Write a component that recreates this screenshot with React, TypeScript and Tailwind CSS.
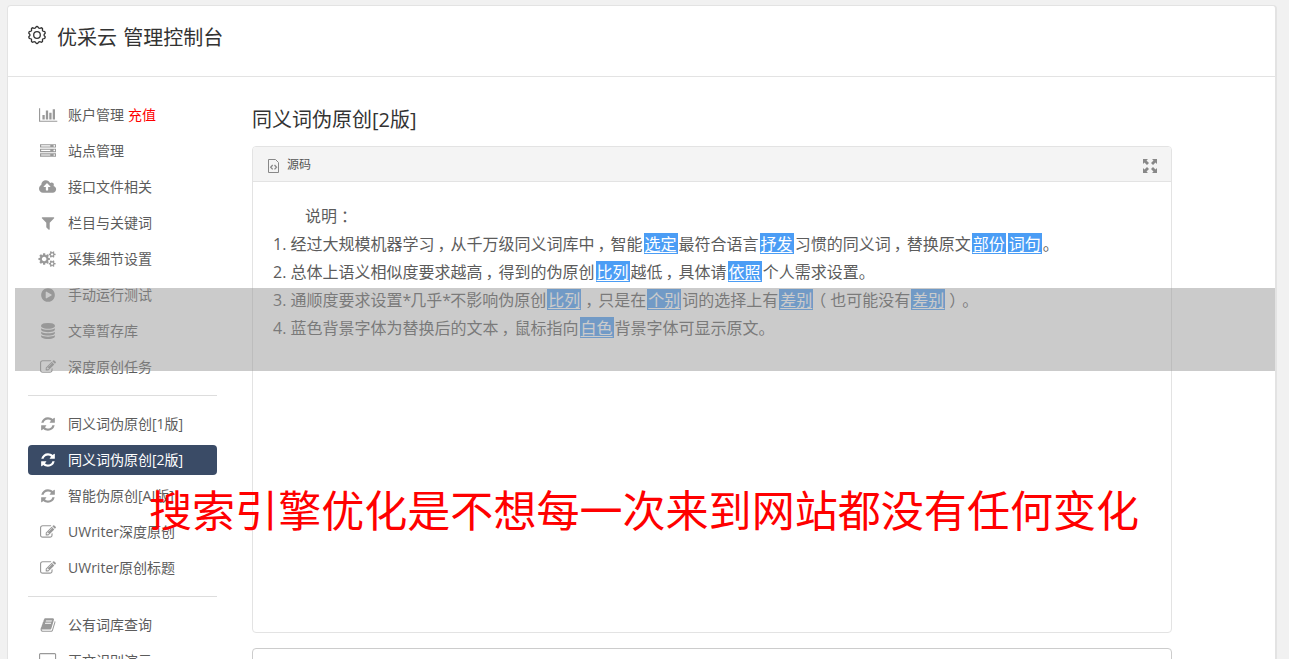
import React from 'react';

interface MenuItem {
  icon: string;
  label: string;
  extra?: string;
  active?: boolean;
}

interface Glyph {
  width: number;
  d: string;
}

const smallCog =
  'v140q0 16-149 31-12 27-30 52 51 113 51 138 0 4-4 7-122 71-124 71-8 0-46-47t-52-68q-20 2-30 2t-30-2q-14 21-52 68t-46 47q-2 0-124-71-4-3-4-7 0-25 51-138-18-25-30-52-149-15-149-31v-140q0-16 149-31 13-29 30-52-51-113-51-138 0-4 4-7 4-2 35-20t59-34 30-16q8 0 46 46.5t52 67.5q20-2 30-2t30 2q51-71 92-112l6-2q4 0 124 70 4 3 4 7 0 25-51 138 17 23 30 52 149 15 149 31z';

const glyphs: Record<string, Glyph> = {
  chart: {
    width: 2048,
    d: 'M640 896v512h-256v-512h256zm384-512v1024h-256v-1024h256zm1024 1152v128h-2048v-1536h128v1408h1920zm-640-896v768h-256v-768h256zm384-384v1152h-256v-1152h256z',
  },
  server: {
    width: 1792,
    d: 'M128 1408h1024v-128h-1024v128zm0-512h1024v-128h-1024v128zm1568 448q0-40-28-68t-68-28-68 28-28 68 28 68 68 28 68-28 28-68zm-1568-960h1024v-128h-1024v128zm1568 448q0-40-28-68t-68-28-68 28-28 68 28 68 68 28 68-28 28-68zm0-512q0-40-28-68t-68-28-68 28-28 68 28 68 68 28 68-28 28-68zm96 832v384h-1792v-384h1792zm0-512v384h-1792v-384h1792zm0-512v384h-1792v-384h1792z',
  },
  upload: {
    width: 1920,
    d: 'M1280 864q0-14-9-23l-352-352q-9-9-23-9t-23 9l-351 351q-10 12-10 24 0 14 9 23t23 9h224v352q0 13 9.5 22.5t22.5 9.5h192q13 0 22.5-9.5t9.5-22.5v-352h224q13 0 22.5-9.5t9.5-22.5zm640 288q0 159-112.5 271.5t-271.5 112.5h-1088q-185 0-316.5-131.5t-131.5-316.5q0-130 70-240t188-165q-2-30-2-43 0-212 150-362t362-150q156 0 285.5 87t188.5 231q71-62 166-62 106 0 181 75t75 181q0 76-41 138 130 31 213.5 135.5t83.5 238.5z',
  },
  filter: {
    width: 1792,
    d: 'M1595 295q17 41-14 70l-493 493v742q0 42-39 59-13 5-25 5-27 0-45-19l-256-256q-19-19-19-45v-486l-493-493q-31-29-14-70 17-39 59-39h1280q42 0 59 39z',
  },
  cogs: {
    width: 1920,
    d:
      'M832 896q0-106-75-181t-181-75-181 75-75 181 75 181 181 75 181-75 75-181zm768 512q0-52-38-90t-90-38-90 38-38 90q0 53 37.5 90.5t90.5 37.5 90.5-37.5 37.5-90.5zm0-1024q0-52-38-90t-90-38-90 38-38 90q0 53 37.5 90.5t90.5 37.5 90.5-37.5 37.5-90.5zm-384 421v185q0 10-7 19.5t-16 10.5l-155 24q-11 35-32 76 34 48 90 115 7 11 7 20 0 12-7 19-23 30-82.5 89.5t-78.5 59.5q-11 0-21-7l-115-90q-37 19-77 31-11 108-23 155-7 24-30 24h-186q-11 0-20-7.5t-10-17.5l-23-153q-34-10-75-31l-118 89q-7 7-20 7-11 0-21-8-144-133-144-160 0-9 7-19 10-14 41-53t47-61q-23-44-35-82l-152-24q-10-1-17-9.5t-7-19.5v-185q0-10 7-19.5t16-10.5l155-24q11-35 32-76-34-48-90-115-7-11-7-20 0-12 7-20 22-30 82-89t79-59q11 0 21 7l115 90q34-18 77-32 11-108 23-154 7-24 30-24h186q11 0 20 7.5t10 17.5l23 153q34 10 75 31l118-89q8-7 20-7 11 0 21 8 144 133 144 160 0 8-7 19-12 16-42 54t-45 60q23 48 34 82l152 23q10 2 17 10.5t7 19.5z' +
      'M1856 1338' + smallCog +
      'M1856 314' + smallCog,
  },
  play: {
    width: 1792,
    d: 'M896 128q209 0 385.5 103t279.5 279.5 103 385.5-103 385.5-279.5 279.5-385.5 103-385.5-103-279.5-279.5-103-385.5 103-385.5 279.5-279.5 385.5-103zm384 823q32-18 32-55t-32-55l-544-320q-31-19-64-1-32 19-32 56v640q0 37 32 56 16 8 32 8 17 0 32-9z',
  },
  database: {
    width: 1792,
    d: 'M896 768q237 0 443-43t325-127v170q0 69-103 128t-280 93.5-385 34.5-385-34.5-280-93.5-103-128v-170q119 84 325 127t443 43zm0 768q237 0 443-43t325-127v170q0 69-103 128t-280 93.5-385 34.5-385-34.5-280-93.5-103-128v-170q119 84 325 127t443 43zm0-384q237 0 443-43t325-127v170q0 69-103 128t-280 93.5-385 34.5-385-34.5-280-93.5-103-128v-170q119 84 325 127t443 43zm0-1152q208 0 385 34.5t280 93.5 103 128v128q0 69-103 128t-280 93.5-385 34.5-385-34.5-280-93.5-103-128v-128q0-69 103-128t280-93.5 385-34.5z',
  },
  edit: {
    width: 1792,
    d: 'M888 1184l116-116-152-152-116 116v56h96v96h56zm440-720q-16-16-33 1l-350 350q-17 17-1 33t33-1l350-350q17-17 1-33zm80 594v190q0 119-84.5 203.5t-203.5 84.5h-832q-119 0-203.5-84.5t-84.5-203.5v-832q0-119 84.5-203.5t203.5-84.5h832q63 0 117 25 15 7 18 23 3 17-9 29l-49 49q-14 14-32 8-23-6-45-6h-832q-66 0-113 47t-47 113v832q0 66 47 113t113 47h832q66 0 113-47t47-113v-126q0-13 9-22l64-64q15-15 35-7t20 29zm-96-738l288 288-672 672h-288v-288zm444 132l-92 92-288-288 92-92q28-28 68-28t68 28l152 152q28 28 28 68t-28 68z',
  },
  refresh: {
    width: 1792,
    d: 'M1639 1056q0 5-1 7-64 268-268 434.5t-478 166.5q-146 0-282.5-55t-243.5-157l-129 129q-19 19-45 19t-45-19-19-45v-448q0-26 19-45t45-19h448q26 0 45 19t19 45-19 45l-137 137q71 66 161 102t187 36q134 0 250-65t186-179q11-17 53-117 8-23 30-23h192q13 0 22.5 9.5t9.5 22.5zm25-800v448q0 26-19 45t-45 19h-448q-26 0-45-19t-19-45 19-45l138-138q-148-137-349-137-134 0-250 65t-186 179q-11 17-53 117-8 23-30 23h-199q-13 0-22.5-9.5t-9.5-22.5v-7q65-268 270-434.5t480-166.5q146 0 284 55.5t245 156.5l130-129q19-19 45-19t45 19 19 45z',
  },
  book: {
    width: 1792,
    d: 'M1703 478q40 57 18 129l-275 906q-19 64-76.5 107.5t-122.5 43.5h-923q-77 0-148.5-53.5t-99.5-131.5q-24-67-2-127 0-4 3-27t4-37q1-8-3-21.5t-3-19.5q2-11 8-21t16.5-23.5 16.5-23.5q23-38 45-91.5t30-91.5q3-10 .5-30t-.5-28q3-11 17-28t17-23q21-36 42-92t25-90q1-9-2.5-32t.5-28q4-13 22-30.5t22-22.5q19-26 42.5-84.5t27.5-96.5q1-8-3-25.5t-2-26.5q2-8 9-18t18-23 17-21q8-12 16.5-30.5t15-35 16-36 19.5-32 26.5-23.5 36-11.5 47.5 5.5l-1 3q38-9 51-9h761q74 0 114 56t18 130l-274 906q-36 119-71.5 153.5t-128.5 34.5h-869q-27 0-38 15-11 16-1 43 24 70 144 70h923q29 0 56-15.5t35-41.5l300-987q7-22 5-57 38 15 59 43zm-1064 2q-4 13 2 22.5t20 9.5h608q13 0 25.5-9.5t16.5-22.5l21-64q4-13-2-22.5t-20-9.5h-608q-13 0-25.5 9.5t-16.5 22.5zm-83 256q-4 13 2 22.5t20 9.5h608q13 0 25.5-9.5t16.5-22.5l21-64q4-13-2-22.5t-20-9.5h-608q-13 0-25.5 9.5t-16.5 22.5z',
  },
  desktop: {
    width: 1920,
    d: 'M1792 992v-832q0-13-9.5-22.5t-22.5-9.5h-1600q-13 0-22.5 9.5t-9.5 22.5v832q0 13 9.5 22.5t22.5 9.5h1600q13 0 22.5-9.5t9.5-22.5zm128-832v1088q0 66-47 113t-113 47h-544q0 37 16 77.5t32 71 16 43.5q0 26-19 45t-45 19h-512q-26 0-45-19t-19-45q0-14 16-44t32-70 16-78h-544q-66 0-113-47t-47-113v-1088q0-66 47-113t113-47h1600q66 0 113 47t47 113z',
  },
};

const groups: MenuItem[][] = [
  [
    { icon: 'chart', label: '账户管理', extra: '充值' },
    { icon: 'server', label: '站点管理' },
    { icon: 'upload', label: '接口文件相关' },
    { icon: 'filter', label: '栏目与关键词' },
    { icon: 'cogs', label: '采集细节设置' },
    { icon: 'play', label: '手动运行测试' },
    { icon: 'database', label: '文章暂存库' },
    { icon: 'edit', label: '深度原创任务' },
  ],
  [
    { icon: 'refresh', label: '同义词伪原创[1版]' },
    { icon: 'refresh', label: '同义词伪原创[2版]', active: true },
    { icon: 'refresh', label: '智能伪原创[AI版]' },
    { icon: 'edit', label: 'UWriter深度原创' },
    { icon: 'edit', label: 'UWriter原创标题' },
  ],
  [
    { icon: 'book', label: '公有词库查询' },
    { icon: 'desktop', label: '正文识别演示' },
  ],
];

const MenuIcon: React.FC<{ name: string }> = ({ name }) => {
  const glyph = glyphs[name];
  return (
    <svg
      viewBox={`0 0 ${glyph.width} 1792`}
      className="h-4 overflow-visible"
      style={{ width: (glyph.width / 1792) * 16 }}
      fill="currentColor"
    >
      <path d={glyph.d} />
    </svg>
  );
};

// Outline of a gear with ten soft teeth
const gearPath = Array.from({ length: 80 }, (_, i) => {
  const angle = (i / 80) * Math.PI * 2;
  const radius = 7.8 + 0.7 * Math.tanh(2.5 * Math.cos(angle * 10));
  return `${i ? 'L' : 'M'}${(9 + radius * Math.sin(angle)).toFixed(2)} ${(9 - radius * Math.cos(angle)).toFixed(2)}`;
}).join('') + 'Z';

const Swap: React.FC<{ children: React.ReactNode }> = ({ children }) => (
  <span className="mx-px mt-[3px] inline-block h-[21px] border border-[#4b9df5] bg-[#4b9df5] align-top leading-[20px] text-white underline decoration-1 underline-offset-2">
    {children}
  </span>
);

const markClass: Record<string, string> = {
  '，': 'ml-[3px] -mr-[3px]',
  '：': 'ml-1 -mr-1',
  '（': '-ml-1 mr-1',
  '）': 'ml-[3px] -mr-[3px]',
};

// Commas, colons and brackets sit in the middle of their cell
const Centered: React.FC<{ children: string }> = ({ children }) => (
  <>
    {children.split(/([，：（）])/).map((part, i) =>
      i % 2 ? (
        <span key={i} className={markClass[part]}>
          {part}
        </span>
      ) : (
        part
      )
    )}
  </>
);

const Sidebar = () => (
  <aside className="ml-5 w-[189px] shrink-0 pt-[23px] text-sm text-[#5c5c5c]">
    {groups.map((group, index) => (
      <div key={index} className={index ? 'mt-[13px] border-t border-[#ddd] pt-[13px]' : ''}>
        {group.map((item) => (
          <div
            key={item.label}
            className={`mb-1.5 flex h-[30px] items-center whitespace-nowrap rounded-[4px] ${
              item.active ? 'bg-[#3a4b66] text-white' : ''
            }`}
          >
            <span className={`flex w-10 justify-center ${item.active ? 'text-white' : 'text-[#999]'}`}>
              <MenuIcon name={item.icon} />
            </span>
            <span>{item.label}</span>
            {item.extra && <span className="ml-1 text-[#f00]">{item.extra}</span>}
          </div>
        ))}
      </div>
    ))}
  </aside>
);

const Editor = () => (
  <main className="ml-[35px] w-[920px] shrink-0 pt-[28px]">
    <h2 className="h-[41px] text-[20px] leading-[30px] text-[#333]">同义词伪原创[2版]</h2>
    <section className="h-[487px] rounded-[4px] border border-[#e3e3e3]">
      <div className="flex h-[35px] items-center rounded-t-[3px] border-b border-[#e3e3e3] bg-[#f4f4f4] px-[14px] text-xs text-[#555]">
        <svg viewBox="0 0 14 16" className="mt-1 mr-1.5 h-4 w-3.5" fill="none" stroke="#888">
          <path d="M1.500 1.500h7l3 3v10h-10z" />
          <path d="M5.700 7L3.700 9.200l2 2.200M7.500 7l2 2.200-2 2.200" strokeWidth="1.300" />
        </svg>
        <span className="mt-0.5">源码</span>
        <svg viewBox="0 0 14 14" className="mt-1 ml-auto h-3.5 w-3.5" fill="#888">
          <path d="M0 0h5L3.500 1.500 6 4 4 6 1.500 3.500 0 5zM14 0v5l-1.500-1.500L10 6 8 4l2.500-2.500L9 0zM0 14V9l1.500 1.500L4 8l2 2-2.500 2.500L5 14zM14 14H9l1.500-1.500L8 10l2-2 2.500 2.500L14 9z" />
        </svg>
      </div>
      <div className="pt-5 pl-5 text-base leading-7 whitespace-nowrap text-[#5c5c5c] [text-spacing-trim:space-all]">
        <p className="h-7 pl-8"><Centered>说明：</Centered></p>
        <p className="h-7">
          <Centered>1. 经过大规模机器学习，从千万级同义词库中，智能</Centered>
          <Swap>选定</Swap>最符合语言<Swap>抒发</Swap>
          <Centered>习惯的同义词，替换原文</Centered>
          <Swap>部份</Swap><Swap>词句</Swap>。
        </p>
        <p className="h-7">
          <Centered>2. 总体上语义相似度要求越高，得到的伪原创</Centered>
          <Swap>比列</Swap>
          <Centered>越低，具体请</Centered>
          <Swap>依照</Swap>个人需求设置。
        </p>
        <p className="h-7">
          3. 通顺度要求设置<span className="tracking-[-1px]">*</span>几乎<span className="tracking-[-1px]">*</span>不影响伪原创<Swap>比列</Swap>
          <Centered>，只是在</Centered>
          <Swap>个别</Swap>词的选择上有<Swap>差别</Swap>
          <Centered>（也可能没有</Centered>
          <Swap>差别</Swap>
          <Centered>）。</Centered>
        </p>
        <p className="h-7">
          <Centered>4. 蓝色背景字体为替换后的文本，鼠标指向</Centered>
          <Swap>白色</Swap>背景字体可显示原文。
        </p>
      </div>
    </section>
    <div className="mt-[15px] h-20 rounded-[4px] border border-[#ccc]" />
  </main>
);

export default function App() {
  return (
    <div className="relative h-[659px] w-[1289px] overflow-hidden bg-[#f1f1f1] pt-[5px] pl-[7px] font-['Open_Sans','Noto_Sans_CJK_SC',sans-serif]">
      <div className="h-[700px] w-[1270px] rounded-[4px] border border-r-2 border-[#e3e3e3] bg-white">
        <header className="flex h-[71px] items-start border-b border-[#e3e3e3] pt-[17px] pl-[20px] text-[20px] leading-[30px] text-[#333]">
          <svg viewBox="0 0 18 18" className="mt-[3px] mr-[11px] h-[18px] w-[18px] overflow-visible" fill="none" stroke="#333" strokeWidth="1.3">
            <path d={gearPath} />
            <circle cx="9" cy="9" r="3.3" />
          </svg>
          <span className="[word-spacing:1px]">优采云 管理控制台</span>
        </header>
        <div className="flex">
          <Sidebar />
          <Editor />
        </div>
      </div>

      {/* Dimmed band and the caption above the page */}
      <div className="absolute top-[288px] left-[15px] h-[83px] w-[1260px] bg-[rgba(151,151,151,0.5)]" />
      <div className="absolute top-[479px] left-[149px] text-[43.05px] leading-[64px] whitespace-nowrap text-[#f00]">
        搜索引擎优化是不想每一次来到网站都没有任何变化
      </div>
    </div>
  );
}
